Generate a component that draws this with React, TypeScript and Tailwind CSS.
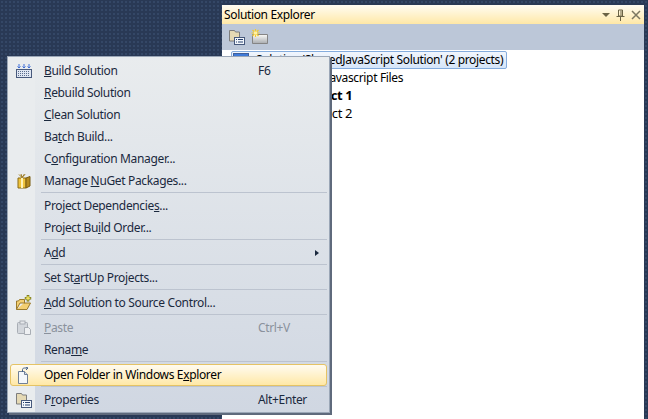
import React from 'react';

// Menu row label: the part wrapped in u is the access key
const Row = ({ children, shortcut, icon, arrow, disabled, active }: {
  children: React.ReactNode;
  shortcut?: string;
  icon?: React.ReactNode;
  arrow?: boolean;
  disabled?: boolean;
  active?: boolean;
}) => (
  <div
    className={
      'relative flex h-[22px] items-center ' +
      (active
        ? 'mx-[2px] rounded-[3px] border border-[#e5c365] bg-gradient-to-b from-[#fffbf0] to-[#ffe8a6] text-[#000000]'
        : disabled
          ? 'mx-[2px] border border-transparent text-[#8a919c]'
          : 'mx-[2px] border border-transparent text-[#1b293e]')
    }
  >
    <div className="flex w-[33px] shrink-0 items-center pl-[5px]">{icon}</div>
    <div className="w-[214px] shrink-0 whitespace-nowrap">{children}</div>
    {shortcut && <div className="whitespace-nowrap">{shortcut}</div>}
    {arrow && <div className="absolute right-[7px] top-[7px] h-0 w-0 border-y-[3.5px] border-l-[4px] border-y-transparent border-l-[#1b293e]" />}
  </div>
);

const Sep = () => (
  <div className="ml-[33px] mr-[2px] h-[3px] border-t border-[#bcc3cf]" />
);

const BuildIcon = () => (
  <svg width="16" height="16" viewBox="0 0 16 16">
    <rect x="0.5" y="6.5" width="15" height="8" fill="#dfe6f2" stroke="#47597c" />
    <path d="M2 8.500h12M2 10.500h12M2 12.500h12" stroke="#5a6c8c" strokeDasharray="1 1" />
    <path d="M3 1v4M1.500 3.500 3 5l1.500-1.500M8 1v4M6.500 3.500 8 5l1.500-1.500M13 1v4M11.500 3.500 13 5l1.500-1.500" stroke="#3f6fd8" fill="none" />
  </svg>
);

const NuGetIcon = () => (
  <svg width="16" height="16" viewBox="0 0 16 16">
    <path d="M2 5h8v10H2z" fill="#f0c43c" stroke="#8a6a14" />
    <path d="M10 5l4-1.500v9.500l-4 2z" fill="#b58a1c" stroke="#7a5c10" />
    <path d="M5 5h2v10H5z" fill="#fff3b8" />
    <path d="M3 1.500 6 4.500l3-3M5 1l1 3.500M8.500 1 6 4.500" stroke="#9c7a20" fill="none" />
  </svg>
);

const AddFolderIcon = () => (
  <svg width="16" height="16" viewBox="0 0 16 16">
    <path d="M0.500 14.500V6h2l1-1.500h5V8H4L0.500 14.500h10.500l3.500-6.500H8" fill="#f3cf72" stroke="#9a7a2c" strokeLinejoin="round" />
    <path d="M12 0v6.500M8.800 3.200h6.400" stroke="#6f6e10" strokeWidth="2.600" />
    <path d="M12 .8v4.800M9.600 3.200h4.800" stroke="#fff26a" strokeWidth="1.200" />
  </svg>
);

const PasteIcon = () => (
  <svg width="16" height="16" viewBox="0 0 16 16">
    <rect x="1.500" y="2.500" width="10" height="11" rx="1" fill="#d3d7dc" stroke="#a9aeb5" />
    <rect x="4" y="1" width="5" height="3" fill="#e6e8eb" stroke="#a9aeb5" />
    <path d="M8.500 7.500h4l2 2v5h-6z" fill="#eef0f2" stroke="#a9aeb5" />
  </svg>
);

const OpenIcon = () => (
  <svg width="16" height="17" viewBox="0 0 16 17">
    <path d="M2.500 4.500h6l3 3v9h-9z" fill="#f4f7fb" stroke="#6f7f97" />
    <path d="M8.500 4.500v3h3" fill="#d5dde9" stroke="#6f7f97" />
    <path d="M6.500 5V2.500c0-1 1-1.500 2-1.500h3M10 0l2 1-2 2" fill="none" stroke="#44618c" />
  </svg>
);

const PropsIcon = () => (
  <svg width="16" height="16" viewBox="0 0 16 16">
    <path d="M0.500 1.500h5l1 1.500h4v9h-10z" fill="#e5d9b4" stroke="#7d7d7d" />
    <rect x="5.500" y="8.500" width="10" height="7" fill="#f3f7fc" stroke="#47597c" />
    <path d="M7 10.500h1M9 10.500h5M7 13h1M9 13h5" stroke="#26406e" />
  </svg>
);

const NewFolderIcon = () => (
  <svg width="17" height="16" viewBox="0 0 17 16">
    <defs>
      <linearGradient id="nf" x1="0" y1="0" x2="0" y2="1">
        <stop offset="0" stopColor="#fbfbf8" />
        <stop offset="1" stopColor="#a9acb0" />
      </linearGradient>
    </defs>
    <path d="M1.500 5.500h15v9h-15z" fill="url(#nf)" stroke="#858585" />
    <path d="M4.500 0v8M.5 4h8M1.500 1l6 6M7.500 1l-6 6" stroke="#f7cb2a" strokeWidth="1.200" />
    <rect x="3" y="2.500" width="3" height="3" fill="#fff2a0" />
  </svg>
);

const SolutionIcon = () => (
  <svg width="16" height="16" viewBox="0 0 16 16">
    <rect x="0.500" y="1.500" width="15" height="13" fill="#f3f6fb" stroke="#3f5f9a" />
    <rect x="1" y="2" width="14" height="2" fill="#3f7ad8" />
  </svg>
);

export default function App() {
  return (
    <div
      className="relative h-[419px] w-[648px] overflow-hidden bg-[#293955] bg-[radial-gradient(#344766_1px,transparent_1px)] bg-[length:4px_4px] pl-[222px] pr-[4px] pt-[5px] text-[12px] font-['Noto_Sans',sans-serif] tracking-[-0.35px]"
    >
      {/* Solution Explorer panel */}
      <div className="flex h-full flex-col bg-white">
        <div className="flex h-[19px] items-center justify-between bg-gradient-to-b from-[#fffcf2] to-[#ffe8a6] pl-[2px] pr-[3px] text-[#000000]">
          <span className="leading-none">Solution Explorer</span>
          <div className="flex items-center gap-[6px]">
            <div className="h-0 w-0 border-x-[4px] border-t-[4px] border-x-transparent border-t-[#6b6345]" />
            <svg width="9" height="12" viewBox="0 0 9 12">
              <path d="M2.500 1h4v6h-4zM5 1.500v5M.5 7.500h8M4.500 8v4" stroke="#6b6345" fill="none" />
            </svg>
            <svg width="10" height="10" viewBox="0 0 10 10">
              <path d="M1 1l8 8M9 1l-8 8" stroke="#7b7761" strokeWidth="1.500" />
            </svg>
          </div>
        </div>
        <div className="flex h-[26px] items-center gap-[6px] bg-[#bcc7d8] pl-[7px]">
          <PropsIcon />
          <NewFolderIcon />
        </div>
        <div className="pl-[9px] pt-[1px] text-[#000000]">
          <div className="flex h-[18px] w-[276px] items-center rounded-[2px] border border-[#84acdd] bg-gradient-to-b from-[#f1f6fd] to-[#d5e5f9]">
            <div className="ml-[1px] w-[23px]"><SolutionIcon /></div>
            <span className="whitespace-nowrap">Solution 'SharedJavaScript Solution' (2 projects)</span>
          </div>
          <div className="flex h-[18px] items-center pl-[58px] whitespace-nowrap">SharedJavascript Files</div>
          <div className="flex h-[18px] items-center pl-[68px] text-[13px] font-bold whitespace-nowrap">Project 1</div>
          <div className="flex h-[18px] items-center pl-[71px] text-[13px] whitespace-nowrap">Project 2</div>
        </div>
      </div>

      {/* Context menu */}
      <div className="absolute left-[7px] top-[56px] w-[323px] border border-[#9ba7b7] bg-gradient-to-b from-[#e9ecee] to-[#d0d7e2] pt-[3px] shadow-[2px_2px_0_#5f6a7c]">
        <div className="absolute bottom-0 left-0 top-0 w-[27px] bg-[#e9ecee]" />
        <div className="relative">
          <Row icon={<BuildIcon />} shortcut="F6"><u>B</u>uild Solution</Row>
          <Row><u>R</u>ebuild Solution</Row>
          <Row><u>C</u>lean Solution</Row>
          <Row>Ba<u>t</u>ch Build...</Row>
          <Row>C<u>o</u>nfiguration Manager...</Row>
          <Row icon={<NuGetIcon />}>Manage <u>N</u>uGet Packages...</Row>
          <Sep />
          <Row>Project Dependencie<u>s</u>...</Row>
          <Row>Project Bu<u>i</u>ld Order...</Row>
          <Sep />
          <Row arrow>A<u>d</u>d</Row>
          <Sep />
          <Row>Set St<u>a</u>rtUp Projects...</Row>
          <Sep />
          <Row icon={<AddFolderIcon />}><u>A</u>dd Solution to Source Control...</Row>
          <Sep />
          <Row icon={<PasteIcon />} shortcut="Ctrl+V" disabled><u>P</u>aste</Row>
          <Row>Rena<u>m</u>e</Row>
          <Sep />
          <Row icon={<OpenIcon />} active>Open Folder in Windows E<u>x</u>plorer</Row>
          <Sep />
          <Row icon={<PropsIcon />} shortcut="Alt+Enter">P<u>r</u>operties</Row>
        </div>
        <div className="h-[1px]" />
      </div>
    </div>
  );
}
